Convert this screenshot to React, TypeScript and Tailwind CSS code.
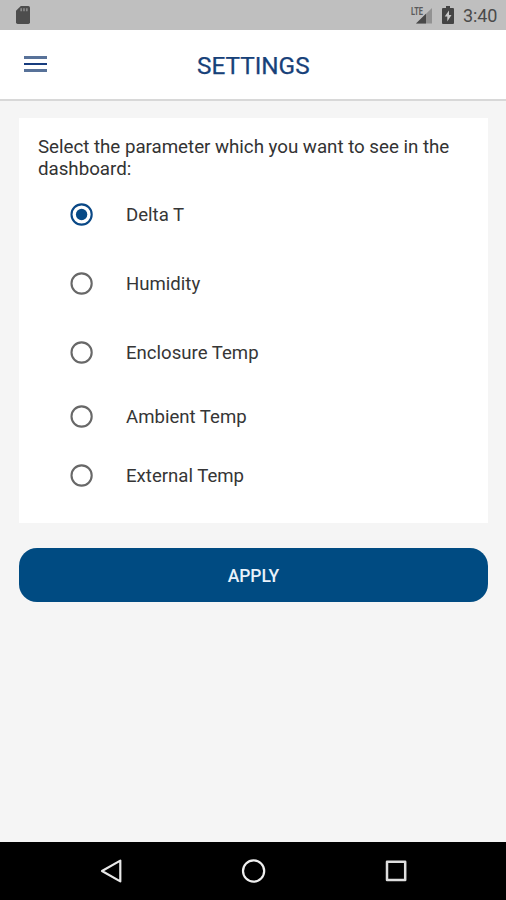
import { useState } from 'react';

const options = [
  { label: 'Delta T', row: 'h-[69px]' },
  { label: 'Humidity', row: 'h-[69px]' },
  { label: 'Enclosure Temp', row: 'h-[69px]' },
  { label: 'Ambient Temp', row: 'h-[59px]' },
  { label: 'External Temp', row: 'h-[59px]' },
];

function StatusBar() {
  return (
    <div className="flex h-[30px] shrink-0 items-center justify-between bg-[#bfbfbf] pl-[15px] pr-[9px]">
      <svg width="17" height="20" viewBox="0 0 17 20">
        <path d="M5.8 1H13.3Q15 1 15 2.7V17.3Q15 19 13.3 19H2.7Q1 19 1 17.3V5.8Z" fill="#4d4d4d" />
        <path d="M6.2 3.3V6.3M9 3.3V6.3M11.8 3.3V6.3" stroke="#8a8a8a" strokeWidth="1.7" />
      </svg>
      <div className="flex items-center">
        <svg width="23" height="20" viewBox="0 0 23 20">
          <path d="M22 3V18.5H6Z" fill="#929292" />
          <path d="M16 8.8V18.5H6Z" fill="#484848" />
          <text x="1" y="9.5" fontFamily="Roboto" fontSize="10.5" fontWeight="700" fill="#5a5a5a" textLength="12" lengthAdjust="spacingAndGlyphs">LTE</text>
        </svg>
        <svg className="ml-[9px]" width="12" height="18" viewBox="0 0 12 18">
          <path d="M4 0H8V2H11Q12 2 12 3V17Q12 18 11 18H1Q0 18 0 17V3Q0 2 1 2H4Z" fill="#444" />
          <path d="M7 4.5L2.7 10.5H5.3V15.5L9.5 9H7Z" fill="#c8c8c8" />
        </svg>
        <span className="ml-[9px] w-[34px] whitespace-nowrap pt-px text-[18px] leading-[30px] tracking-[-0.1px] text-[#4a4a4a]">3:40</span>
      </div>
    </div>
  );
}

function Header() {
  return (
    <header className="flex h-[71px] shrink-0 items-center border-b-2 border-[#d8d8d8] bg-white">
      <button className="mb-px ml-[23.5px] flex w-[23px] flex-col gap-1" aria-label="Menu">
        <span className="h-[3px] w-full bg-[#587299]" />
        <span className="h-[2px] w-full bg-[#173c7e]" />
        <span className="h-[3px] w-full bg-[#587299]" />
      </button>
      <h1 className="ml-[150.5px] pt-[2px] text-[24.3px] leading-[30px] text-[#174179] [-webkit-text-stroke:0.25px_#174179]">SETTINGS</h1>
    </header>
  );
}

function RadioMark({ selected }: { selected: boolean }) {
  return (
    <svg width="24" height="24" viewBox="0 0 24 24" className="shrink-0">
      <circle cx="11.6" cy="11.5" r="10.1" fill="none" stroke={selected ? '#0a4886' : '#686868'} strokeWidth="2.1" />
      {selected && <circle cx="11.6" cy="11.5" r="5.7" fill="#074a86" />}
    </svg>
  );
}

function NavBar() {
  return (
    <nav className="flex h-[58px] shrink-0 items-center justify-between bg-black pl-[99px] pr-[98px]">
      <svg width="24" height="26" viewBox="0 0 24 26" fill="none" stroke="#e8e8e8" strokeWidth="2.2" strokeLinejoin="round">
        <path d="M3 13L21.3 2.6V23.4Z" />
      </svg>
      <svg width="26" height="26" viewBox="0 0 26 26" fill="none" stroke="#efefef" strokeWidth="2.2">
        <circle cx="12.6" cy="13" r="10.6" />
      </svg>
      <svg width="24" height="26" viewBox="0 0 24 26" fill="none" stroke="#dedede" strokeWidth="2.5" strokeLinejoin="round">
        <rect x="3" y="3.8" width="18.2" height="18.2" />
      </svg>
    </nav>
  );
}

export default function App() {
  const [selected, setSelected] = useState('Delta T');
  return (
    <div className="flex h-[900px] w-[506px] flex-col bg-[#f5f5f5] font-['Roboto',sans-serif]">
      <StatusBar />
      <Header />
      <main className="flex-1 pl-[19px] pr-[18px] pt-[17px]">
        <section className="h-[405px] bg-white pt-[18px]">
          <p className="ml-[19px] whitespace-nowrap text-[18.75px] leading-[22px] tracking-[-0.03px] text-[#333]">
            Select the parameter which you want to see in the
            <br />
            dashboard:
          </p>
          <div role="radiogroup">
            {options.map((option) => (
              <button
                key={option.label}
                role="radio"
                aria-checked={selected === option.label}
                onClick={() => setSelected(option.label)}
                className={`flex w-full items-center pl-[51px] ${option.row}`}
              >
                <RadioMark selected={selected === option.label} />
                <span className="ml-8 whitespace-nowrap text-[18.6px] leading-[22px] text-[#363636]">
                  {option.label}
                </span>
              </button>
            ))}
          </div>
        </section>
        <button className="mt-[25px] flex h-[54px] w-full items-center justify-center rounded-[18px] bg-[#004b82] pt-[2px] text-[17.5px] font-medium tracking-[-0.1px] text-[#e9f1fa]">
          APPLY
        </button>
      </main>
      <NavBar />
    </div>
  );
}
